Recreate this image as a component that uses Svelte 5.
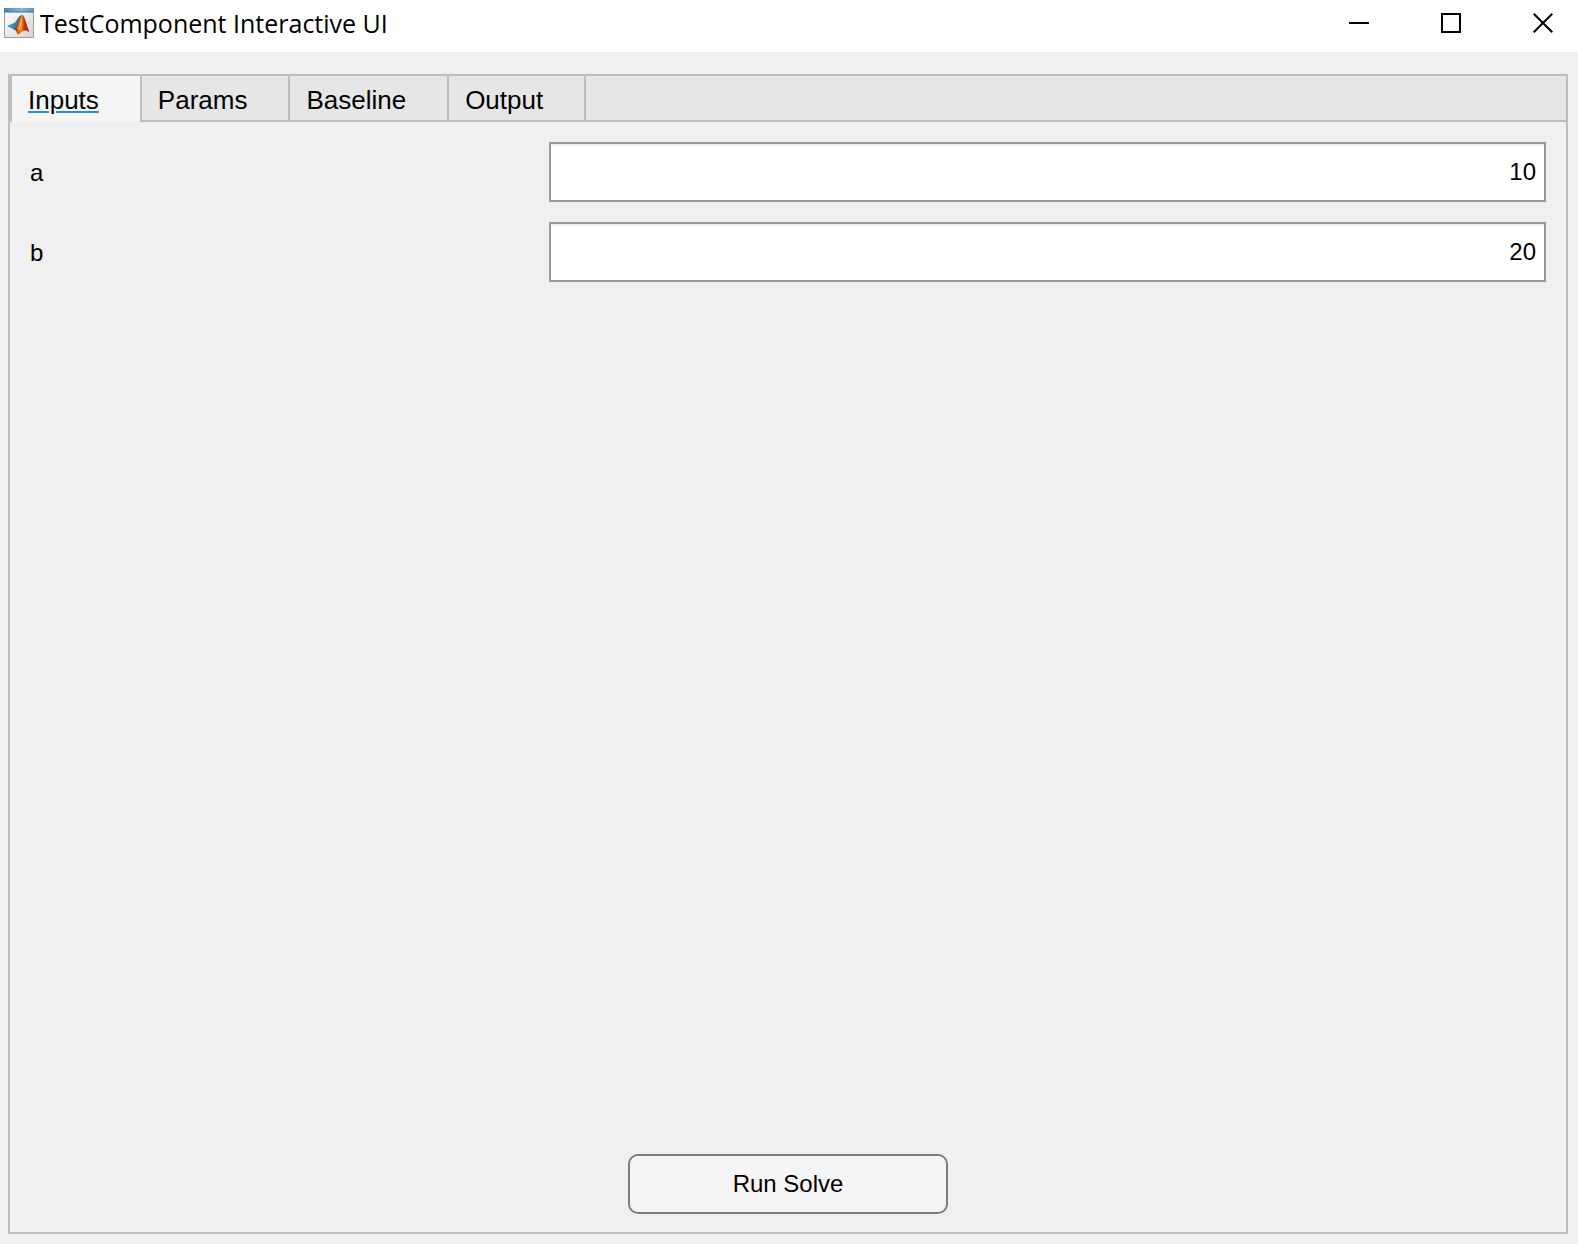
<script>
	let tabs = ['Inputs', 'Params', 'Baseline', 'Output'];
	let activeTab = 'Inputs';

	let inputs = [
		{ name: 'a', value: '10' },
		{ name: 'b', value: '20' }
	];

	function selectTab(tab) {
		activeTab = tab;
	}
</script>

<div class="window">
	<header class="titlebar">
		<svg class="app-icon" viewBox="0 0 30 30" aria-hidden="true">
			<defs>
				<linearGradient id="paper" x1="0" y1="0" x2="1" y2="1">
					<stop offset="0" stop-color="#ffffff" />
					<stop offset="1" stop-color="#d4d4d4" />
				</linearGradient>
				<linearGradient id="bar" x1="0" y1="0" x2="1" y2="0">
					<stop offset="0" stop-color="#4f83ad" />
					<stop offset="0.6" stop-color="#86b8dc" />
					<stop offset="1" stop-color="#5b93c0" />
				</linearGradient>
				<linearGradient id="wing" x1="0" y1="0" x2="1" y2="0">
					<stop offset="0" stop-color="#4a9fd8" />
					<stop offset="1" stop-color="#2b5f8c" />
				</linearGradient>
				<linearGradient id="peak" x1="0" y1="0" x2="1" y2="0">
					<stop offset="0" stop-color="#6e1a10" />
					<stop offset="0.35" stop-color="#d94a16" />
					<stop offset="0.5" stop-color="#f08a28" />
					<stop offset="0.65" stop-color="#c93a10" />
					<stop offset="1" stop-color="#8f1a08" />
				</linearGradient>
			</defs>
			<rect x="0.5" y="0.5" width="29" height="29" fill="url(#paper)" stroke="#a0a0a0" />
			<rect width="30" height="4" fill="url(#bar)" />
			<path d="M0 4h30" stroke="#3f6d94" />
			<path d="M3 18L9.500 15.200C12 14.800 13 11 15.500 8L18 6.800L15.500 17L10.500 21.500L8 20.500Z" fill="url(#wing)" />
			<path d="M9.500 21.500C14 19.500 14.500 11 18 6.800C21.500 8 22 17 25.500 24C23 22.500 21 22 19 23C17 24.200 15.500 26.200 13.500 26.500C13 24 12 21.500 9.500 21.500Z" fill="url(#peak)" />
			<path d="M15.500 14C16.500 11 17.300 8.500 18 7.500C18.800 13 18 19.500 14.300 25.500C14 22.500 13.500 20.500 12.500 20C14 18.500 14.800 16 15.500 14Z" fill="#f07a20" />
			<path d="M17.800 9.500C18.500 14 17.500 18.500 14.800 23C15.500 18 16.500 14 17.800 9.500Z" fill="#ffc548" />
		</svg>
		<h1>TestComponent Interactive UI</h1>
		<div class="window-controls">
			<button type="button" aria-label="Minimize">
				<svg viewBox="0 0 20 20"><path d="M0 10h20" /></svg>
			</button>
			<button type="button" aria-label="Maximize">
				<svg viewBox="0 0 20 20"><rect x="1" y="1" width="18" height="18" /></svg>
			</button>
			<button type="button" aria-label="Close">
				<svg viewBox="0 0 20 20"><path d="M0.700 0.700l18.600 18.600M19.300 0.700L0.700 19.300" /></svg>
			</button>
		</div>
	</header>

	<main class="panel">
		<div class="tabs" role="tablist">
			{#each tabs as tab}
				<button
					type="button"
					class="tab"
					class:active={activeTab === tab}
					role="tab"
					aria-selected={activeTab === tab}
					on:click={() => selectTab(tab)}
				>{tab}</button>
			{/each}
			<div class="tabs-rest"></div>
		</div>

		<form class="content" on:submit|preventDefault>
			{#if activeTab === 'Inputs'}
				<div class="fields">
					{#each inputs as input}
						<label for="input-{input.name}">{input.name}</label>
						<input id="input-{input.name}" type="text" inputmode="decimal" bind:value={input.value} />
					{/each}
				</div>
			{/if}
			<button type="submit" class="run">Run Solve</button>
		</form>
	</main>
</div>

<style>
	:global(body) {
		margin: 0;
		background: #f0f0f0;
	}

	.window {
		display: flex;
		flex-direction: column;
		box-sizing: border-box;
		min-height: 100vh;
		padding-bottom: 10px;
		color: #000;
		font-family: "Liberation Sans", Arial, sans-serif;
		font-size: 24px;
	}

	button,
	input {
		box-sizing: border-box;
		margin: 0;
		color: inherit;
		font-family: inherit;
		font-size: inherit;
	}

	.titlebar {
		display: flex;
		align-items: center;
		height: 46px;
		padding: 0 25px 6px 4px;
		background: #fff;
	}

	.app-icon {
		width: 30px;
		height: 30px;
	}

	h1 {
		flex: 1;
		margin: 0 0 0 6px;
		font-family: "Open Sans", "Segoe UI", sans-serif;
		font-size: 25px;
		font-weight: 400;
		line-height: 32px;
		white-space: nowrap;
	}

	.window-controls {
		display: flex;
		gap: 72px;
	}

	.window-controls button {
		padding: 0;
		border: none;
		background: none;
	}

	.window-controls svg {
		display: block;
		width: 20px;
		height: 20px;
		fill: none;
		stroke: #000;
		stroke-width: 2;
	}

	.panel {
		flex: 1;
		display: flex;
		flex-direction: column;
		margin: 22px 10px 0 8px;
		border: 2px solid #bdbdbd;
	}

	.tabs {
		display: flex;
		border-left: 2px solid #bdbdbd;
	}

	.tab {
		height: 46px;
		padding: 4px 41px 0 16px;
		border: solid #bdbdbd;
		border-width: 0 2px 2px 0;
		background: #e6e6e6;
		font-size: 26px;
		line-height: 40px;
	}

	.tab.active {
		border-bottom: none;
		padding-bottom: 2px;
		background: #f5f5f5;
		text-decoration: underline;
		text-decoration-color: #268cdd;
		text-decoration-thickness: 2px;
		text-underline-offset: 2px;
	}

	.tabs-rest {
		flex: 1;
		border-bottom: 2px solid #bdbdbd;
		background: #e6e6e6;
	}

	.content {
		flex: 1;
		display: flex;
		flex-direction: column;
		padding: 20px 20px 18px;
	}

	.fields {
		display: grid;
		grid-template-columns: 1fr 2fr;
		gap: 20px;
		align-items: center;
	}

	.fields label {
		padding-top: 2px;
	}

	.fields input {
		width: 100%;
		height: 60px;
		padding: 0 8px;
		border: 2px solid #999;
		border-radius: 0;
		background: #fff;
		box-shadow: inset 0 2px #f0f0f0;
		text-align: right;
	}

	.run {
		align-self: center;
		width: 320px;
		height: 60px;
		margin-top: auto;
		border: 2px solid #7d7d7d;
		border-radius: 10px;
		background: #f5f5f5;
	}
</style>
